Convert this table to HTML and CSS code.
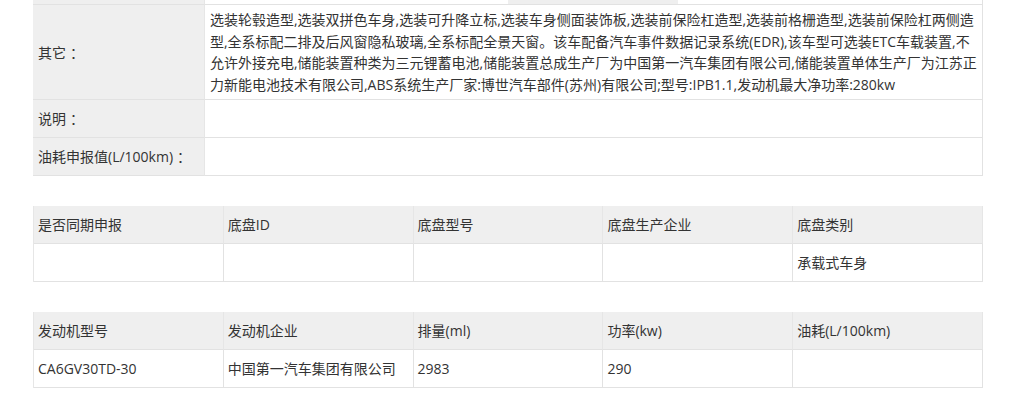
FILE: index.html
```html
<!DOCTYPE html>
<html lang="zh-CN">
<head>
<meta charset="utf-8">
<title>车辆参数</title>
<link rel="stylesheet" href="styles.css">
</head>
<body>
<div class="page">
  <table class="info">
    <tr class="prev-row">
      <td class="label"></td>
      <td class="value"><div class="prev-box"></div></td>
    </tr>
    <tr>
      <td class="label">其它<span class="colon">：</span></td>
      <td class="value long">选装轮毂造型,选装双拼色车身,选装可升降立标,选装车身侧面装饰板,选装前保险杠造型,选装前格栅造型,选装前保险杠两侧造<br>型,全系标配二排及后风窗隐私玻璃,全系标配全景天窗。该车配备汽车事件数据记录系统(EDR),该车型可选装ETC车载装置,不<br>允许外接充电,储能装置种类为三元锂蓄电池,储能装置总成生产厂为中国第一汽车集团有限公司,储能装置单体生产厂为江苏正<br>力新能电池技术有限公司,ABS系统生产厂家:博世汽车部件(苏州)有限公司;型号:IPB1.1,发动机最大净功率:280kw</td>
    </tr>
    <tr>
      <td class="label">说明<span class="colon">：</span></td>
      <td class="value"></td>
    </tr>
    <tr>
      <td class="label">油耗申报值(L/100km)<span class="colon">：</span></td>
      <td class="value"></td>
    </tr>
  </table>

  <table class="grid">
    <tr class="head">
      <td>是否同期申报</td>
      <td>底盘ID</td>
      <td>底盘型号</td>
      <td>底盘生产企业</td>
      <td>底盘类别</td>
    </tr>
    <tr>
      <td></td>
      <td></td>
      <td></td>
      <td></td>
      <td>承载式车身</td>
    </tr>
  </table>

  <table class="grid">
    <tr class="head">
      <td>发动机型号</td>
      <td>发动机企业</td>
      <td>排量(ml)</td>
      <td>功率(kw)</td>
      <td>油耗(L/100km)</td>
    </tr>
    <tr>
      <td>CA6GV30TD-30</td>
      <td>中国第一汽车集团有限公司</td>
      <td>2983</td>
      <td>290</td>
      <td></td>
    </tr>
  </table>
</div>
</body>
</html>
```

FILE: styles.css
```css
html, body {
  margin: 0;
  padding: 0;
  background: #ffffff;
}

body {
  font-family: "Open Sans", "Noto Sans CJK SC", sans-serif;
  font-size: 14px;
  color: #333333;
}

.page {
  padding-left: 33px;
  width: 950px;
}

table {
  border-collapse: separate;
  border-spacing: 0;
  width: 950px;
  table-layout: fixed;
}

td {
  padding: 0 5px;
  line-height: 21px;
  vertical-align: middle;
  text-align: left;
  word-break: break-all;
}

.colon {
  font-family: "Noto Sans CJK SC", sans-serif;
  margin-left: 4px;
}

/* info table */
.info td {
  border-bottom: 1px solid #e2e2e2;
  height: 37px;
  padding-top: 0;
  padding-bottom: 0;
}

.info .label {
  width: 161px;
  background: #efefef;
  padding-left: 5px;
}

.info .value {
  border-right: 1px solid #e2e2e2;
  border-left: 1px solid #e6e6e6;
  padding-left: 5px;
  padding-right: 5px;
}

.info .prev-row td {
  height: 4px;
  line-height: 4px;
}

.prev-box {
  width: 170px;
  height: 4px;
  margin-left: 298px;
  background: #efefef;
}

.info .long {
  line-height: 21.5px;
  padding-top: 4px;
  padding-bottom: 4px;
  padding-right: 1px;
  height: auto;
}

/* grid tables */
.grid {
  margin-top: 30px;
  border-left: 1px solid #e6e6e6;
}

.grid td {
  height: 37px;
  border-right: 1px solid #e2e2e2;
  border-bottom: 1px solid #e2e2e2;
  padding-left: 4px;
}

.grid .head td {
  background: #efefef;
  border-right-color: #e6e6e6;
}
```
